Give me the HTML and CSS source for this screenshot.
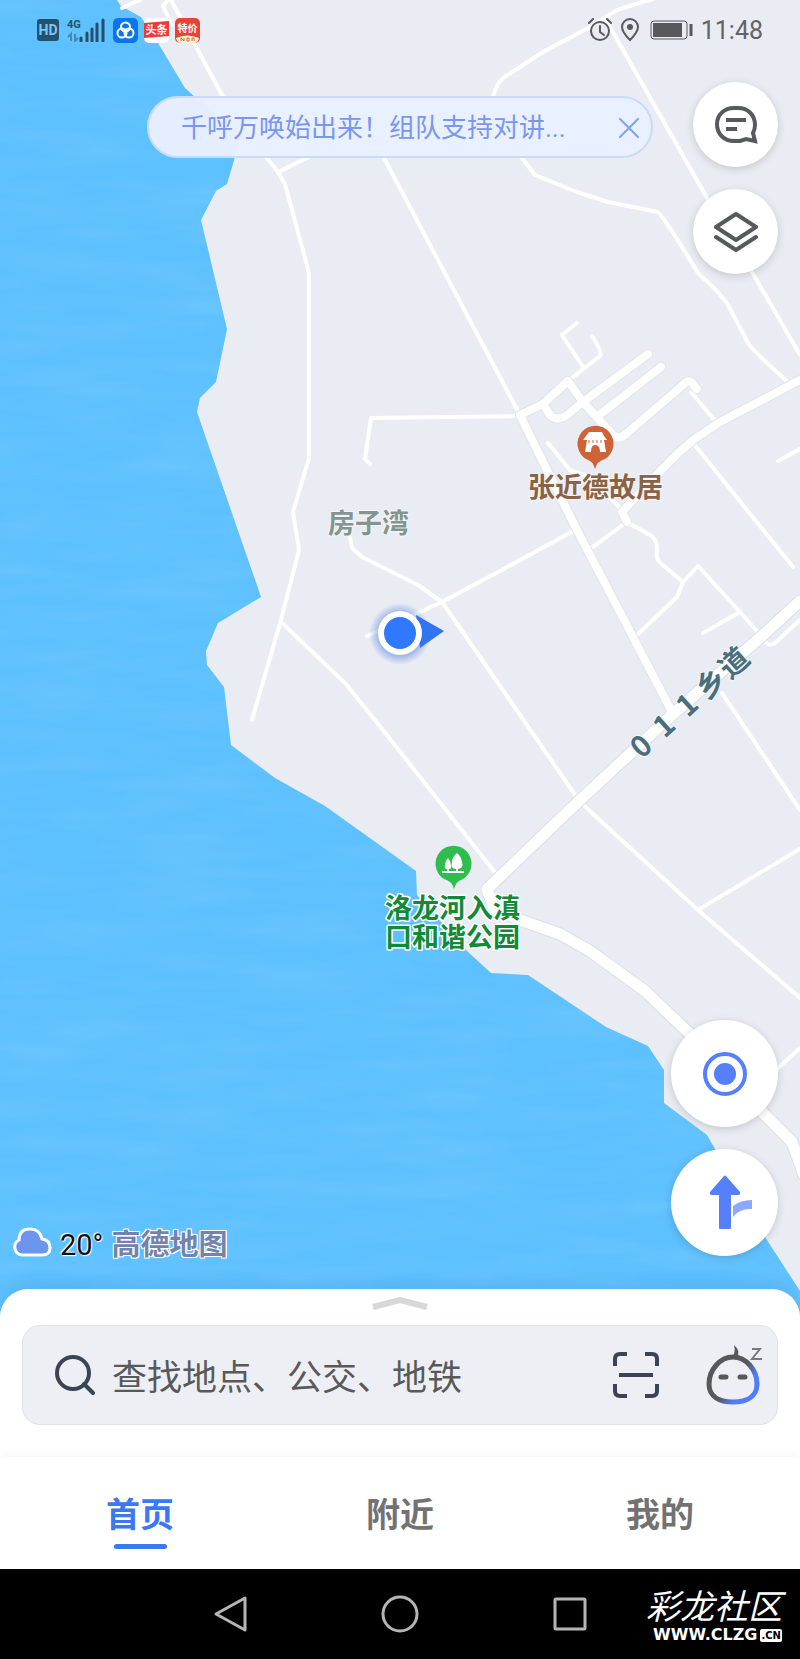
FILE: index.html
```html
<!DOCTYPE html>
<html lang="zh-CN">
<head>
  <meta charset="UTF-8">
  <meta name="viewport" content="width=device-width, initial-scale=1">
  <title>高德地图</title>
  <link rel="stylesheet" href="styles.css">
</head>
<body>
  <div class="app">
    <main class="map">
      <svg class="map-canvas" viewBox="0 0 800 1317" preserveAspectRatio="xMidYMid slice">
        <defs>
          <g id="roads-wide">
            <path d="M800 601L762 636L673 714L580 800L487 889L494 908L520 920L560 934L590 951L645 991L688 1032L763 1113L792 1142L804 1175"/>
          </g>
          <g id="roads-mid">
            <path d="M520 415L547 470L578 532L633 637L673 714"/>
            <path d="M520 415L543 404L568 381L583 402L613 435Q620 441 627 433L683 385Q689 378 693 384L697 389"/>
            <path d="M543 404L550 415Q557 422 567 415L583 402L648 354"/>
            <path d="M598 416L661 367"/>
            <path d="M800 380L720 422L693 440L673 458L650 482L622 512L627 522"/>
          </g>
          <radialGradient id="glow">
            <stop offset="0.6" stop-color="#3f6fd8" stop-opacity="0.55"/>
            <stop offset="1" stop-color="#3f6fd8" stop-opacity="0"/>
          </radialGradient>
          <filter id="waves" x="0" y="0" width="100%" height="100%">
            <feTurbulence type="fractalNoise" baseFrequency="0.008 0.05" numOctaves="3" seed="4"/>
            <feColorMatrix values="0 0 0 0 0.42  0 0 0 0 0.79  0 0 0 0 1  0.8 0 0 0 -0.25"/>
          </filter>
          <clipPath id="lake-clip"><use href="#lake"/></clipPath>
          <path id="lake" d="M0 0H117L121 6L141 17L155 38L185 88L205 106L240 140L235 157L227 184L216 191L201 220L227 329L216 382L200 398L197 412L261 597L218 623L206 651L207 665L224 687L231 745L275 778L325 806L416 871L417 895L467 951L491 973L528 975L606 1027L648 1046L664 1070V1103L707 1135L715 1149L765 1237L800 1291V1317H0Z"/>
        </defs>

        <rect class="land" width="800" height="1317"/>
        <use href="#lake" class="lake"/>
        <g clip-path="url(#lake-clip)" opacity="0.3"><rect width="800" height="1317" filter="url(#waves)"/></g>

        <g class="road road-small">
          <path d="M122 8L140 0"/>
          <path d="M168 0L163 6L172 25M171 0L222 95L267 158L278 172L285 184L309 273V458L293 512L299 550L281 620L252 720"/>
          <path d="M278 172L309 157"/>
          <path d="M384 158L520 415"/>
          <path d="M520 416L371 418L365 459L370 464"/>
          <path d="M281 622L346 684L387 735L497 875"/>
          <path d="M350 537L352 548L362 557L418 585L442 602L480 657L580 802L698 910L800 998"/>
          <path d="M367 636L442 602L500 571L577 529"/>
          <path d="M698 910L800 849"/>
          <path d="M722 693L800 810"/>
          <path d="M493 97Q496 85 503 78L543 52L590 27L617 10Q635 4 653 -1"/>
          <path d="M606 20L707 198L752 272L800 355"/>
          <path d="M522 158L535 175L577 192L608 202L658 212Q664 217 698 273L716 290L727 303L748 343Q752 350 788 382"/>
          <path d="M568 381L600 356Q603 353 592 336M583 367L562 335L577 323"/>
          <path d="M691 392L717 423"/>
          <path d="M693 443L793 567"/>
          <path d="M548 443L570 470L590 477L622 510"/>
          <path d="M590 549L627 522L650 535Q658 540 657 552Q655 560 664 566L683 582L698 566L740 612L762 637"/>
          <path d="M683 582L677 597L635 637"/>
          <path d="M740 612L703 633"/>
          <path d="M762 638Q768 648 775 643L800 620"/>
          <path d="M778 461L800 449"/>
          <path d="M778 1068L800 1048"/>
        </g>
        <use href="#roads-mid" class="road casing-mid"/>
        <use href="#roads-wide" class="road casing-wide"/>
        <use href="#roads-mid" class="road road-mid"/>
        <use href="#roads-wide" class="road road-wide"/>

        <g class="pin pin-museum">
          <path d="M595 469Q593 461 586 459A18 18 0 1 1 605 459Q597 461 595 469Z"/>
          <path class="pin-glyph" d="M589 432H602L604 436L607 440H583L586 436ZM587 440H604L605 446L606 452H600Q600 445 595 445Q591 445 591 452H585L586 446Z"/>
          <path d="M589 440V443M593 440V443M597 440V443M601 440V443" stroke="#ce6338"/>
        </g>
        <g class="pin pin-park">
          <path d="M454 889Q452 881 444 879A18 18 0 1 1 463 879Q456 881 454 889Z"/>
          <path class="pin-glyph" d="M457 853Q452 857 452 862Q450 869 456 869V871H442V873H464V871H458V869Q464 868 462 862Q461 856 457 853ZM448 858Q445 861 445 865Q444 869 447 869V871H449V869Q452 869 451 865Q451 861 448 858Z"/>
        </g>

        <text class="label label-village" x="328" y="533">房子湾</text>
        <text class="label label-museum" x="528" y="497">张近德故居</text>
        <text class="label label-park"><tspan x="385" y="918">洛龙河入滇</tspan><tspan x="385" y="947">口和谐公园</tspan></text>
        <text class="label label-road" transform="translate(648 754) rotate(-42)" x="0 31 62 94 125">011乡道</text>

        <circle cx="400" cy="634" r="31" fill="url(#glow)"/>
        <path d="M416 615L444 631L420 648Z" fill="#2f74f0"/>
        <circle cx="400" cy="633" r="22" fill="#fff"/>
        <circle cx="400" cy="633" r="16" fill="#3078ff"/>
      </svg>

      <header class="status-bar">
        <svg class="hd" viewBox="0 0 22 22" width="22" height="22">
          <rect width="22" height="22" rx="3" fill="#23526e"/>
          <text x="11" y="16" text-anchor="middle" font-size="14" font-weight="700" fill="#7cc8f4">HD</text>
        </svg>
        <svg class="signal" viewBox="0 0 38 24" width="38" height="24">
          <text x="0" y="10" font-size="11" font-weight="700" fill="#22516d">4G</text>
          <path d="M4 23V16L1 19M8 16V23L11 20" stroke="#4889b0" stroke-width="2" fill="none"/>
          <path d="M14 23V20M20 23V15M25 23V11M30 23V6M36 23V2" stroke="#22516d" stroke-width="3" stroke-linecap="round"/>
        </svg>
        <svg class="app-icon" viewBox="0 0 25 25" width="25" height="25">
          <rect width="25" height="25" rx="5" fill="#0a76ee"/>
          <g fill="none" stroke="#fff" stroke-width="2"><circle cx="12.500" cy="9" r="4.500"/><circle cx="9" cy="15" r="4.500"/><circle cx="16" cy="15" r="4.500"/></g>
        </svg>
        <svg class="app-icon" viewBox="0 0 25 25" width="25" height="25">
          <rect width="25" height="25" rx="5" fill="#fff"/>
          <path d="M0 5L25 3V18L0 20Z" fill="#ea3a3c"/>
          <text x="12.500" y="16" text-anchor="middle" font-size="11" font-weight="700" fill="#fff">头条</text>
        </svg>
        <svg class="app-icon" viewBox="0 0 25 25" width="25" height="25">
          <rect width="25" height="25" rx="5" fill="#ed4136"/>
          <path d="M1 20Q12 15 24 20Q23 25 19 25H6Q2 25 1 20Z" fill="#fff1d0"/>
          <path d="M6 23V20L9 23V20M12 20H14V23H12ZM17 23V20H19V23" fill="none" stroke="#dd6a33"/>
          <text x="12.500" y="14" text-anchor="middle" font-size="10" font-weight="700" fill="#fff">特价</text>
        </svg>
        <div class="status-right">
          <svg viewBox="0 0 24 24" width="24" height="24" fill="none" stroke="#58595c" stroke-width="2" stroke-linecap="round">
            <circle cx="12" cy="13" r="9"/><path d="M12 8V14L16 17M1 5L5 1M19 1L23 5"/>
          </svg>
          <svg viewBox="0 0 20 24" width="20" height="24">
            <path d="M10 22Q2 14 2 9A8 8 0 0 1 18 9Q18 14 10 22Z" fill="none" stroke="#58595c" stroke-width="2"/><circle cx="10" cy="9" r="3" fill="#58595c"/>
          </svg>
          <svg class="battery" viewBox="0 0 43 20" width="43" height="20">
            <rect x="1" y="1" width="36" height="18" rx="3" fill="none" stroke="#58595c"/><rect x="3" y="3" width="29" height="14" fill="#58595c"/><path d="M41 4V16" stroke="#58595c" stroke-width="3"/>
          </svg>
          <span class="clock">11:48</span>
        </div>
      </header>

      <div class="map-top">
        <div class="banner">
          <a class="banner-text" href="#">千呼万唤始出来！组队支持对讲...</a>
          <button class="banner-close" type="button" aria-label="关闭">
            <svg viewBox="0 0 20 20" width="20" height="20"><path d="M1 1L19 19M19 1L1 19" stroke="#7fa3f2" stroke-width="2" stroke-linecap="round"/></svg>
          </button>
        </div>
        <div class="controls">
          <button class="round-btn" type="button" aria-label="消息">
            <svg viewBox="0 0 44 44" width="44" height="44" fill="none" stroke="#58595c" stroke-width="4">
              <path d="M41 38L39 30Q41 26 41 22C41 12 34 5 24 5H20C10 5 3 12 3 21C3 31 10 38 20 38H26L32 36L41 38Z" stroke-linejoin="miter"/>
              <path d="M12 17H32M12 26H23"/>
            </svg>
          </button>
          <button class="round-btn" type="button" aria-label="图层">
            <svg viewBox="0 0 44 44" width="44" height="44" fill="none" stroke="#58595c" stroke-width="4" stroke-linejoin="round" stroke-linecap="round">
              <path d="M22 4L42 17L22 30L2 17ZM2 27L22 40L42 27"/>
            </svg>
          </button>
        </div>
      </div>

      <div class="map-bottom">
        <div class="weather">
          <svg viewBox="0 0 40 32" width="40" height="32">
            <path d="M10 29A8 8 0 0 1 7 14Q7 3 18 3Q28 3 30 13Q38 14 38 22Q38 29 30 29Z" fill="#6c95ee" stroke="#fff" stroke-width="3"/>
          </svg>
          <span class="degrees">20°</span>
          <span class="brand">高德地图</span>
        </div>
        <div class="controls">
          <button class="round-btn big" type="button" aria-label="定位">
            <svg viewBox="0 0 44 44" width="44" height="44"><circle cx="22" cy="22" r="20" fill="none" stroke="#557ffb" stroke-width="4"/><circle cx="22" cy="22" r="11" fill="#557ffb"/></svg>
          </button>
          <button class="round-btn big" type="button" aria-label="路线">
            <svg viewBox="0 0 56 56" width="56" height="56">
              <path d="M27 1Q28 0 29 1L43 17Q44 20 41 20H34V53Q34 54 33 54H23Q22 54 22 53V20H15Q12 20 13 17Z" fill="#557ffb"/>
              <path d="M36 31Q43 25 55 25V34Q43 33 36 42Z" fill="#8ca8ff"/>
            </svg>
          </button>
        </div>
      </div>
    </main>

    <section class="sheet">
      <button class="handle" type="button" aria-label="展开">
        <svg viewBox="0 0 56 14" width="56" height="14"><path d="M1 10L28 3L55 10" fill="none" stroke="#d8d8d8" stroke-width="6" stroke-linejoin="round"/></svg>
      </button>
      <form class="search">
        <label for="searchInput" aria-label="搜索">
          <svg viewBox="0 0 40 40" width="40" height="40" fill="none" stroke="#3b4454" stroke-width="4"><circle cx="18" cy="18" r="16"/><path d="M29 29L38 38" stroke-linecap="round"/></svg>
        </label>
        <input type="text" id="searchInput" placeholder="查找地点、公交、地铁">
        <button type="button" aria-label="扫一扫">
          <svg viewBox="0 0 46 46" width="46" height="46" fill="none" stroke="#3b4454" stroke-width="4">
            <path d="M2 14V7Q2 2 7 2H14M32 2H39Q44 2 44 7V14M44 32V39Q44 44 39 44H32M14 44H7Q2 44 2 39V32M6 23H40"/>
          </svg>
        </button>
        <button class="assistant" type="button" aria-label="语音助手">
          <svg viewBox="0 0 56 60" width="56" height="60">
            <defs><linearGradient id="face" x1="0.400" y1="0.500" x2="0.800" y2="0.800"><stop offset="0.200" stop-color="#57585a"/><stop offset="0.800" stop-color="#507dff"/></linearGradient></defs>
            <path d="M27 12C40 12 51 25 51 39C51 52 40 57 27 57C14 57 3 52 3 39C3 25 14 12 27 12Z" fill="none" stroke="url(#face)" stroke-width="5"/>
            <path d="M26 12Q30 8 28 0Q35 6 31 12Z" fill="#57585a"/>
            <path d="M15 32H20M34 32H39" stroke="#57585a" stroke-width="5" stroke-linecap="round"/>
            <path d="M46 4H54L46 14H56" fill="none" stroke="#77787a" stroke-width="2"/>
          </svg>
        </button>
      </form>
    </section>

    <nav class="tabs">
      <a class="tab active" href="#">首页</a>
      <a class="tab" href="#">附近</a>
      <a class="tab" href="#">我的</a>
    </nav>

    <footer class="system-nav">
      <button type="button" aria-label="返回"><svg viewBox="0 0 36 40" width="36" height="40"><path d="M33 4V36L4 20Z"/></svg></button>
      <button type="button" aria-label="主屏幕"><svg viewBox="0 0 40 40" width="40" height="40"><circle cx="20" cy="20" r="17"/></svg></button>
      <button type="button" aria-label="最近任务"><svg viewBox="0 0 36 40" width="36" height="40"><rect x="3" y="5" width="30" height="30" rx="1"/></svg></button>
      <div class="watermark">
        <span class="watermark-name">彩龙社区</span>
        <span class="watermark-url">WWW.CLZG<b>.CN</b></span>
      </div>
    </footer>
  </div>
</body>
</html>
```

FILE: styles.css
```css
* {
  box-sizing: border-box;
}
body {
  margin: 0;
  font-family: Roboto, "Noto Sans CJK SC", sans-serif;
  background: #fff;
}
button {
  padding: 0;
  border: none;
  background: none;
  cursor: pointer;
}
a {
  text-decoration: none;
}
svg {
  display: block;
  flex: none;
}
.app {
  display: flex;
  flex-direction: column;
  min-height: 100vh;
}

/* map */
.map {
  position: relative;
  flex: 1;
  display: flex;
  flex-direction: column;
  margin-bottom: -28px;
  overflow: hidden;
}
.map-canvas {
  position: absolute;
  inset: 0;
  width: 100%;
  height: 100%;
}
.land {
  fill: #e9ecf3;
}
.lake {
  fill: #5dc0ff;
}
.road {
  fill: none;
  stroke: #fff;
  stroke-linecap: round;
  stroke-linejoin: round;
}
.road-small {
  stroke-width: 4px;
}
.road-mid {
  stroke-width: 8px;
}
.road-wide {
  stroke-width: 11px;
}
.casing-mid {
  stroke: #e1e4ea;
  stroke-width: 10px;
}
.casing-wide {
  stroke: #dcdfe5;
  stroke-width: 13px;
}
.pin-museum {
  fill: #ce6338;
}
.pin-park {
  fill: #30bd50;
}
.pin-glyph {
  fill: #fff;
}
.label {
  font-family: "Noto Sans CJK SC", sans-serif;
  font-size: 27px;
  font-weight: 700;
  paint-order: stroke;
  stroke: #f4f6f9;
  stroke-width: 2px;
  stroke-linejoin: round;
}
.label-village {
  fill: #83958f;
}
.label-museum {
  fill: #8b6344;
}
.label-park {
  fill: #118a38;
  stroke: #fff;
  stroke-width: 3px;
}
.label-road {
  font-size: 29px;
  fill: #4a6e7c;
  text-anchor: middle;
}

/* status bar */
.status-bar {
  position: relative;
  display: flex;
  align-items: center;
  gap: 6px;
  height: 60px;
  padding: 0 37px;
}
.status-bar svg text {
  font-family: Roboto, "Noto Sans CJK SC", sans-serif;
}
.hd,
.signal {
  margin-right: 2px;
}
.status-right {
  display: flex;
  align-items: center;
  gap: 8px;
  margin-left: auto;
}
.battery {
  margin-left: 2px;
}
.clock {
  padding-top: 2px;
  font-size: 25px;
  line-height: 30px;
  color: #626366;
}

/* things floating on the map */
.map-top,
.map-bottom {
  position: relative;
  display: flex;
  justify-content: space-between;
  padding: 0 22px;
}
.map-top {
  padding-top: 22px;
}
.map-bottom {
  align-items: flex-end;
  margin-top: auto;
  padding: 0 22px 61px 12px;
}
.banner {
  flex: 1;
  display: flex;
  align-items: center;
  justify-content: space-between;
  height: 62px;
  margin: 14px 40px 0 125px;
  padding: 2px 8px 0 32px;
  border: 2px solid #cbd9fb;
  border-radius: 31px;
  background: rgba(232, 239, 255, 0.97);
}
.banner-text {
  font-size: 26px;
  line-height: 40px;
  color: #7a96ee;
  white-space: nowrap;
}
.banner-close {
  padding: 4px;
}
.controls {
  display: flex;
  flex-direction: column;
  gap: 22px;
}
.round-btn {
  display: flex;
  align-items: center;
  justify-content: center;
  width: 85px;
  height: 85px;
  border-radius: 50%;
  background: #fff;
  box-shadow: 0 2px 8px rgba(0, 0, 0, 0.16);
}
.round-btn.big {
  width: 107px;
  height: 107px;
}
.weather {
  display: flex;
  align-items: center;
  gap: 8px;
  margin-bottom: -5px;
}
.degrees,
.brand {
  padding-top: 6px;
  font-size: 29px;
  line-height: 32px;
}
.degrees {
  color: #111;
  text-shadow: 0 0 2px #fff, 1px 1px 1px #fff, -1px -1px 1px #fff;
}
.brand {
  font-weight: 700;
  color: #7483aa;
  text-shadow: 1px 1px 0 #fff, -1px -1px 0 #fff, 1px -1px 0 #fff, -1px 1px 0 #fff;
}

/* search sheet */
.sheet {
  position: relative;
  padding: 0 22px 32px;
  border-radius: 28px 28px 0 0;
  background: #fff;
  box-shadow: 0 -4px 16px rgba(0, 60, 120, 0.12);
}
.handle {
  display: flex;
  justify-content: center;
  width: 100%;
  height: 36px;
  padding-top: 8px;
}
.search {
  display: flex;
  align-items: center;
  height: 100px;
  padding: 0 15px 0 32px;
  border: 1px solid #e0e1e5;
  border-radius: 18px;
  background: #eeeff4;
}
.search input {
  flex: 1;
  min-width: 0;
  padding: 0 0 0 17px;
  border: none;
  outline: none;
  background: none;
  font-family: "Noto Sans CJK SC", sans-serif;
  font-size: 35px;
  line-height: 48px;
}
.search input::placeholder {
  color: #58595b;
}
.assistant {
  margin-left: 47px;
}

/* tabs */
.tabs {
  position: relative;
  display: flex;
  height: 112px;
  padding: 0 10px;
  background: #fff;
  box-shadow: 0 -2px 8px rgba(0, 0, 0, 0.04);
}
.tab {
  flex: 1;
  display: flex;
  flex-direction: column;
  align-items: center;
  padding-top: 34px;
  font-size: 34px;
  font-weight: 700;
  line-height: 48px;
  color: #727272;
}
.tab.active {
  color: #3b78f3;
}
.tab.active::after {
  content: "";
  width: 53px;
  height: 5px;
  margin-top: 5px;
  border-radius: 3px;
  background: #3b78f3;
}

/* system bar */
.system-nav {
  position: relative;
  display: flex;
  align-items: center;
  justify-content: center;
  gap: 132px;
  height: 90px;
  background: #000;
}
.system-nav svg {
  fill: none;
  stroke: #b5b5b5;
  stroke-width: 3px;
  stroke-linejoin: round;
}
.watermark {
  position: absolute;
  right: 18px;
  bottom: 15px;
  display: flex;
  flex-direction: column;
  align-items: flex-end;
  color: #fff;
}
.watermark-name {
  font-family: "Noto Sans CJK SC", sans-serif;
  font-size: 34px;
  font-style: italic;
  font-weight: 400;
  line-height: 42px;
}
.watermark-url {
  display: flex;
  align-items: center;
  gap: 3px;
  font-family: "DejaVu Sans", sans-serif;
  font-size: 16px;
  font-weight: 700;
  line-height: 18px;
}
.watermark-url b {
  padding: 0 1px;
  border-radius: 2px;
  background: #fff;
  color: #000;
  font-size: 10px;
  line-height: 13px;
}
```
